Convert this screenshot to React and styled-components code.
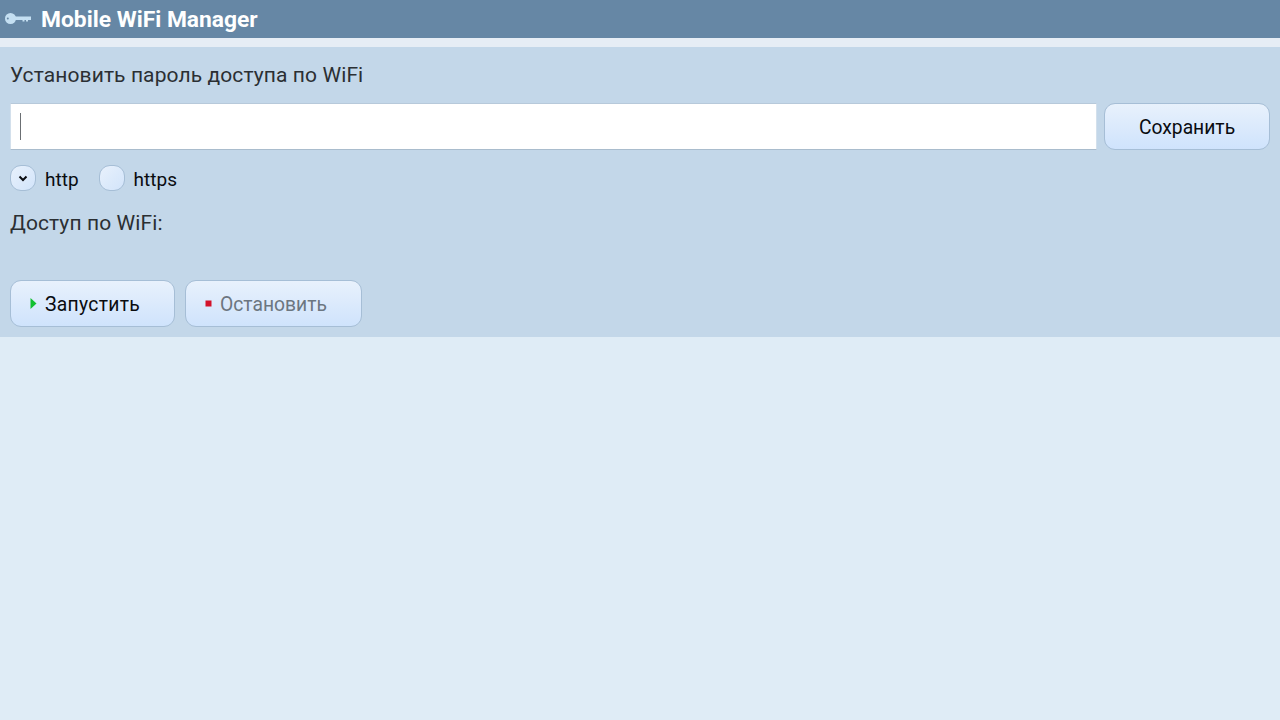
import React from "react";
import styled, { createGlobalStyle } from "styled-components";

const GlobalStyle = createGlobalStyle`
  html, body {
    margin: 0;
    padding: 0;
    height: 100%;
    background-color: #dfecf6;
    font-family: Roboto, "Liberation Sans", sans-serif;
  }
`;

const Page = styled.div`
  width: 1280px;
  height: 720px;
  overflow: hidden;
  background-color: #dfecf6;
`;

const TitleBar = styled.header`
  display: flex;
  align-items: center;
  gap: 9px;
  height: 38px;
  padding-left: 5px;
  background-color: #6687a5;
`;

const Title = styled.h1`
  margin: 0;
  color: #fff;
  font-size: 22.8px;
  font-weight: 700;
`;

const Strip = styled.div`
  height: 9px;
  background-color: #e6edf5;
`;

const Panel = styled.section`
  display: flex;
  flex-direction: column;
  height: 290px;
  box-sizing: border-box;
  padding: 0 10px;
  background-color: #c3d7e9;
`;

const Label = styled.div`
  color: #2b2f33;
  font-size: 21px;
  letter-spacing: 0.1px;
  line-height: 24px;
  margin-top: ${p => p.$top}px;
`;

const PasswordRow = styled.div`
  display: flex;
  gap: 7px;
  margin-top: 16px;
`;

const Field = styled.div`
  flex: 1;
  display: flex;
  align-items: center;
  height: 47px;
  box-sizing: border-box;
  padding-left: 9px;
  background-color: #fff;
  border: 1px solid #a9bccd;
  border-top-color: #b7c9da;
  border-left-color: #d3e0ec;
  border-right-color: #d3e0ec;
`;

const Caret = styled.span`
  width: 1px;
  height: 27px;
  background-color: #6b6f73;
`;

const Button = styled.button`
  display: flex;
  align-items: center;
  justify-content: ${p => (p.$icon ? "flex-start" : "center")};
  gap: 8px;
  width: ${p => p.$width}px;
  height: 47px;
  box-sizing: border-box;
  padding: 2px 0 0 ${p => (p.$icon ? 19 : 0)}px;
  border: 1px solid #a6bed6;
  border-radius: 11px;
  background: linear-gradient(#e8f1fc, #cfe3fc);
  color: ${p => (p.$disabled ? "#6c7680" : "#0a0c10")};
  font-family: inherit;
  font-size: 19.3px;
  letter-spacing: ${p => p.$spacing || 0}px;
`;

const ProtocolRow = styled.div`
  display: flex;
  align-items: center;
  margin-top: 15px;
  height: 26px;
`;

const Radio = styled.span`
  display: flex;
  align-items: center;
  justify-content: center;
  width: 26px;
  height: 26px;
  box-sizing: border-box;
  border: 1px solid #a6bed6;
  border-radius: 11px;
  background: linear-gradient(135deg, #e8f1fc, #d2e4fa);
`;

const RadioLabel = styled.span`
  margin: 0 20px 0 9px;
  padding-top: 2px;
  color: #0a0c10;
  font-size: 19px;
`;

const Actions = styled.div`
  display: flex;
  gap: 10px;
  margin-top: 45px;
`;

const KeyIcon = () => (
  <svg width="27" height="14" viewBox="0 0 27 14">
    <circle cx="5.500" cy="6.500" r="5.500" fill="#c4dff2" />
    <path d="M9 4.500h17v3.500h-3v1.500h-2v-1.500h-1.500v1.500h-2v-1.500h-8.500z" fill="#c4dff2" />
    <circle cx="2.800" cy="6.500" r="1" fill="#6687a5" />
  </svg>
);

const Chevron = () => (
  <svg width="10" height="7" viewBox="0 0 10 7">
    <path d="M1.500 1.500L5 5l3.500-3.500" fill="none" stroke="#0a0c10" strokeWidth="2" />
  </svg>
);

const PlayIcon = () => (
  <svg width="7" height="13" viewBox="0 0 7 13">
    <path d="M0.500 0L6.500 5.500L0.500 11z" fill="#12c030" />
  </svg>
);

const StopIcon = () => (
  <svg width="7" height="13" viewBox="0 0 7 13">
    <rect x="0.500" y="2.500" width="6" height="6" fill="#d3122a" />
  </svg>
);

export default function App() {
  return (
    <Page>
      <GlobalStyle />
      <TitleBar>
        <KeyIcon />
        <Title>Mobile WiFi Manager</Title>
      </TitleBar>
      <Strip />
      <Panel>
        <Label $top={16}>Установить пароль доступа по WiFi</Label>
        <PasswordRow>
          <Field>
            <Caret />
          </Field>
          <Button $width={166}>Сохранить</Button>
        </PasswordRow>
        <ProtocolRow>
          <Radio>
            <Chevron />
          </Radio>
          <RadioLabel>http</RadioLabel>
          <Radio />
          <RadioLabel>https</RadioLabel>
        </ProtocolRow>
        <Label $top={20}>Доступ по WiFi:</Label>
        <Actions>
          <Button $width={165} $icon $spacing={0.3}>
            <PlayIcon />
            Запустить
          </Button>
          <Button $width={177} $icon $disabled>
            <StopIcon />
            Остановить
          </Button>
        </Actions>
      </Panel>
    </Page>
  );
}
